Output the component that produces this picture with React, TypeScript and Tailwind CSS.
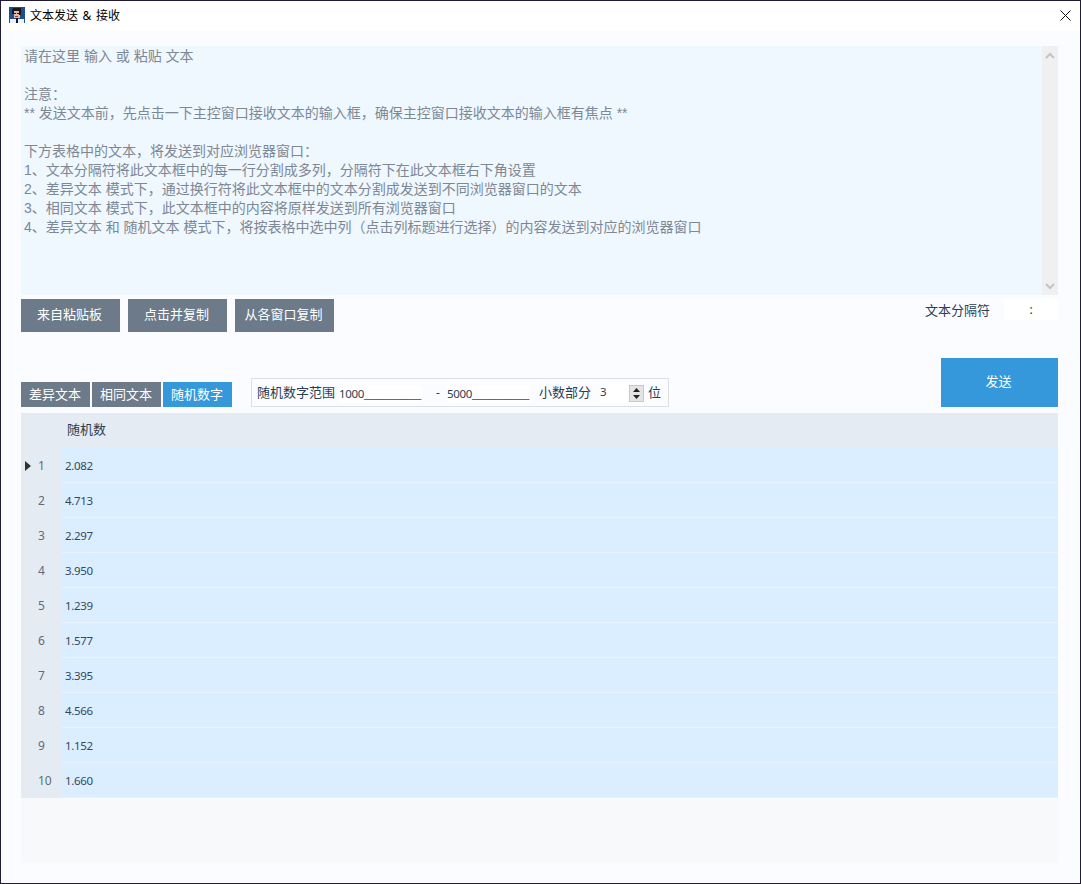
const FONT = '"Noto Sans","Noto Sans CJK SC",sans-serif';
const rows = ["2.082","4.713","2.297","3.950","1.239","1.577","3.395","4.566","1.152","1.660"];
const lines = [
  "请在这里 输入 或 粘贴 文本","",
  "注意：",
  "** 发送文本前，先点击一下主控窗口接收文本的输入框，确保主控窗口接收文本的输入框有焦点 **","",
  "下方表格中的文本，将发送到对应浏览器窗口：",
  "1、文本分隔符将此文本框中的每一行分割成多列，分隔符下在此文本框右下角设置",
  "2、差异文本 模式下，通过换行符将此文本框中的文本分割成发送到不同浏览器窗口的文本",
  "3、相同文本 模式下，此文本框中的内容将原样发送到所有浏览器窗口",
  "4、差异文本 和 随机文本 模式下，将按表格中选中列（点击列标题进行选择）的内容发送到对应的浏览器窗口",
];

function Logo() {
  return (
    <svg className="-mt-[2px] shrink-0" width="16" height="16" viewBox="0 0 16 16" shapeRendering="crispEdges">
      <rect width="16" height="16" fill="#1c4f8c" />
      <rect x="4" y="1" width="8" height="3" fill="#17181f" />
      <rect x="3" y="2" width="2" height="5" fill="#17181f" />
      <rect x="5" y="4" width="6" height="7" fill="#e9b9a0" />
      <rect x="10" y="3" width="2" height="5" fill="#17181f" />
      <rect x="5" y="6" width="2" height="1" fill="#17181f" />
      <rect x="8" y="6" width="2" height="1" fill="#17181f" />
      <rect x="6" y="9" width="3" height="1" fill="#a33f3f" />
      <rect x="1" y="12" width="14" height="4" fill="#eef2f6" />
      <rect x="7" y="11" width="2" height="5" fill="#17181f" />
    </svg>
  );
}

function Chevron({ up }: { up?: boolean }) {
  return (
    <svg width="10" height="7" viewBox="0 0 10 7" fill="none" stroke="#c4c4c4" strokeWidth="2">
      <path d={up ? "M1 6l4-4 4 4" : "M1 1l4 4 4-4"} />
    </svg>
  );
}

function Btn({ children }: { children: string }) {
  return <button className="flex h-[33px] w-[99px] items-center justify-center bg-[#6c7a89] pb-[1px] pr-[2px] text-[13px] text-white">{children}</button>;
}

function Tab({ children, active }: { children: string; active?: boolean }) {
  return <div className={`flex h-[25px] w-[69px] items-center justify-center pr-[1px] text-[13px] text-white ${active ? "bg-[#3498db]" : "bg-[#6c7a89]"}`}>{children}</div>;
}

function NumField({ value }: { value: string }) {
  return (
    <span className="h-[17px] w-[83px] shrink-0 whitespace-nowrap bg-white text-[11.5px] leading-[17px] tracking-[-0.35px]">
      {value}____________
    </span>
  );
}

export default function App() {
  return (
    <div className="flex h-[884px] w-[1081px] flex-col overflow-hidden border border-[#1f1c33] bg-[#fbfcff] text-[#2c3e50]" style={{ fontFamily: FONT }}>
      <div className="flex h-[30px] shrink-0 items-center bg-white pl-2 pr-[9px]">
        <Logo />
        <span className="ml-[5px] text-[12px] text-black [word-spacing:1.5px]">文本发送 &amp; 接收</span>
        <svg className="-mt-[1px] ml-auto" width="11" height="11" viewBox="0 0 11 11" stroke="#111" strokeWidth="1" fill="none">
          <path d="M0.5 0.5l10 10M10.5 0.5l-10 10" />
        </svg>
      </div>

      <div className="flex flex-1 flex-col pb-5 pl-5 pr-[22px] pt-[15px]">
        <div className="flex h-[249px] shrink-0 bg-[#eff7ff]">
          <div className="flex-1 px-[3px] pt-[1px] text-[14px] leading-[19px] text-[#7d8894]" style={{ fontFamily: '"Liberation Sans","Noto Sans CJK SC",sans-serif' }}>
            {lines.map((l, i) => <div key={i} className="h-[19px] whitespace-pre">{l}</div>)}
          </div>
          <div className="flex w-4 flex-col items-center justify-between bg-[#f0f0f0] pb-[5px] pt-[6px]">
            <Chevron up />
            <Chevron />
          </div>
        </div>

        <div className="mt-1 flex shrink-0 items-start">
          <div className="flex gap-2">
            <Btn>来自粘贴板</Btn>
            <Btn>点击并复制</Btn>
            <Btn>从各窗口复制</Btn>
          </div>
          <span className="ml-auto mt-[2px] text-[13px]">文本分隔符</span>
          <div className="ml-[14px] flex h-[21px] w-[54px] items-center justify-center bg-white text-[12px]">:</div>
        </div>

        <div className="mt-[26px] flex h-[49px] shrink-0 items-end">
          <div className="flex gap-[2px]">
            <Tab>差异文本</Tab>
            <Tab>相同文本</Tab>
            <Tab active>随机数字</Tab>
          </div>
          <div className="ml-[19px] flex h-[29px] w-[418px] items-center whitespace-nowrap border border-[#dcdfe3] pl-[5px] pt-[1px] text-[13px]">
            <span className="mr-1 shrink-0">随机数字范围</span>
            <NumField value="1000" />
            <span className="ml-[14px] w-[11px] shrink-0 text-[12px]">-</span>
            <NumField value="5000" />
            <span className="ml-[9px] shrink-0">小数部分</span>
            <span className="ml-[9px] h-[18px] w-[28px] shrink-0 bg-white text-[11.5px] leading-[16px]">3</span>
            <div className="ml-[1px] flex h-[17px] w-[15px] shrink-0 flex-col items-center justify-center gap-[3px] border border-[#c8c8c8] bg-[#e4e4e4]">
              <svg width="7" height="4" viewBox="0 0 7 4"><path d="M3.5 0L7 4H0z" fill="#222" /></svg>
              <svg width="7" height="4" viewBox="0 0 7 4"><path d="M3.5 4L0 0h7z" fill="#222" /></svg>
            </div>
            <span className="ml-1 shrink-0">位</span>
          </div>
          <button className="ml-auto h-[49px] w-[117px] bg-[#3498db] pb-[1px] pr-[2px] text-[13px] text-white">发送</button>
        </div>

        <div className="mt-[6px] flex flex-1 flex-col bg-[#f8f9fb]">
          <div className="flex h-[35px] shrink-0 items-center bg-[#e5ebf2] pb-[1px]">
            <span className="ml-[46px] text-[13px]">随机数</span>
          </div>
          {rows.map((v, i) => (
            <div key={v} className="flex h-[35px] shrink-0 bg-[#e5ebf2]">
              <div className="relative flex w-[41px] items-center pl-[17px] text-[12px] text-[#5d6d7e]">
                {i === 0 && (
                  <svg className="absolute left-1 top-[13px]" width="6" height="10" viewBox="0 0 6 10"><path d="M0 0l6 5-6 5z" fill="#333" /></svg>
                )}
                {i + 1}
              </div>
              <div className="flex flex-1 items-center border-b border-[#eaf3fb] bg-[#dbeeff] pl-[3px] pt-[2px] text-[11.5px] tracking-[-0.35px] text-[#34485c]">{v}</div>
            </div>
          ))}
        </div>
      </div>
    </div>
  );
}
